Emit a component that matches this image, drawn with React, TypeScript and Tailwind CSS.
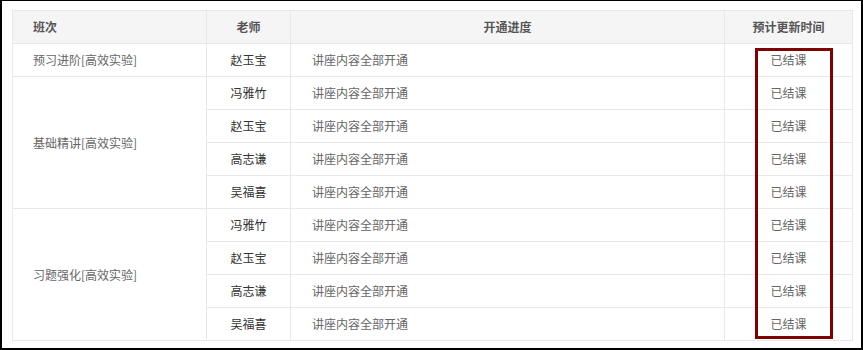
const groups = [
  { name: '预习进阶[高效实验]', teachers: ['赵玉宝'] },
  { name: '基础精讲[高效实验]', teachers: ['冯雅竹', '赵玉宝', '高志谦', '吴福喜'] },
  { name: '习题强化[高效实验]', teachers: ['冯雅竹', '赵玉宝', '高志谦', '吴福喜'] },
];

const cell = 'border border-[#e8e8e8] h-[33px] p-0 text-[12px]';

export default function App() {
  return (
    <div
      className="relative w-[863px] h-[350px] bg-white border-t border-l-2 border-r-2 border-b-2 border-black pt-[9px] pl-[10px]"
      style={{ fontFamily: "'Microsoft YaHei', 'Noto Sans CJK SC', sans-serif" }}
    >
      <table className="border-collapse w-[840px] table-fixed">
        <colgroup>
          <col className="w-[194px]" />
          <col className="w-[84px]" />
          <col className="w-[434px]" />
          <col className="w-[128px]" />
        </colgroup>
        <thead>
          <tr className="bg-[#f5f5f5] text-[#555] font-bold">
            <th className={`${cell} text-left pl-[20px]`}>班次</th>
            <th className={`${cell} text-center`}>老师</th>
            <th className={`${cell} text-center`}>开通进度</th>
            <th className={`${cell} text-center`}>预计更新时间</th>
          </tr>
        </thead>
        <tbody>
          {groups.map((g) =>
            g.teachers.map((t, i) => (
              <tr key={g.name + i}>
                {i === 0 && (
                  <td rowSpan={g.teachers.length} className={`${cell} text-left pl-[20px] text-[#666]`}>
                    {g.name}
                  </td>
                )}
                <td className={`${cell} text-center text-[#333]`}>{t}</td>
                <td className={`${cell} text-left pl-[21px] text-[#666]`}>讲座内容全部开通</td>
                <td className={`${cell} text-center text-[#666]`}>已结课</td>
              </tr>
            ))
          )}
        </tbody>
      </table>
      <div className="absolute left-[753px] top-[47px] w-[78px] h-[291px] border-[3px] border-[#800000]" />
    </div>
  );
}
